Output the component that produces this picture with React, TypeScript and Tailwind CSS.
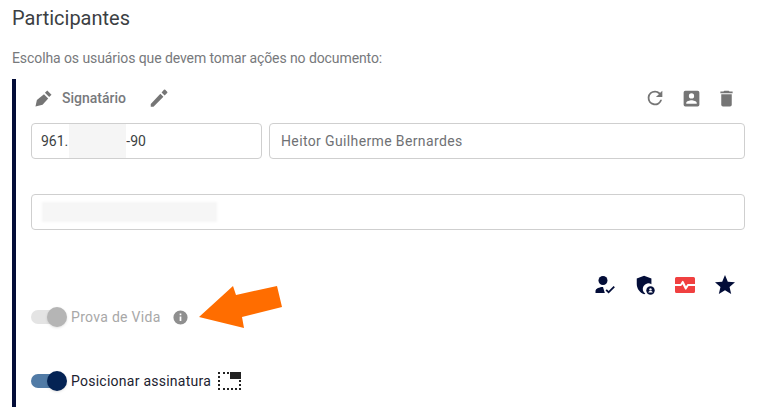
function PenIcon({ className }: { className?: string }) {
  return (
    <svg viewBox="0 0 24 24" className={className} fill="currentColor">
      <path d="M3 18.500V21.500h3L16.800 10.700l-3.300-3.300L3 18.500zM20.900 6.600a1 1 0 0 0 0-1.400l-2.100-2.100a1 1 0 0 0-1.400 0l-2.600 2.900 3.300 3.300 2.800-2.700z" />
    </svg>
  );
}

function SignIcon({ className }: { className?: string }) {
  return (
    <svg viewBox="0 0 18 18" className={className} fill="currentColor">
      <path d="M0.500 17.500 L2 10.500 L9.500 4.500 L14 9 L8 15.500 Z" />
      <path d="M10.500 3 L13 0.500 L17.500 5 L15 7.500 Z" />
    </svg>
  );
}

function Switch({ disabled }: { disabled?: boolean }) {
  return (
    <div className="relative h-[14px] w-[36px] shrink-0">
      <div className={`absolute left-0 top-0 h-[14px] w-[33px] rounded-full ${disabled ? "bg-[#e4e4e4]" : "bg-[#517ba6]"}`} />
      <div className={`absolute right-0 top-[-3px] h-[20px] w-[20px] rounded-full shadow-sm ${disabled ? "bg-[#b5b5b5]" : "bg-[#042354]"}`} />
    </div>
  );
}

export default function App() {
  return (
    <div className="relative h-[407px] w-[769px] overflow-hidden bg-white pl-[12px] font-['Roboto',sans-serif]">
      <h1 className="pt-[5px] text-[20px] leading-[26px] text-[#3c3f43]">Participantes</h1>
      <p className="mt-[17px] text-[14px] leading-[20px] tracking-[-0.09px] text-[#77797c]">
        Escolha os usuários que devem tomar ações no documento:
      </p>

      <div className="mt-[11px] h-[400px] w-[733px] border-l-4 border-[#030d38] pl-[15px]">
        <div className="flex h-[44px] w-[714px] items-center pb-[6px]">
          <SignIcon className="ml-[4px] h-[17px] w-[17px] text-[#757575]" />
          <span className="ml-[10px] text-[14px] font-medium text-[#77797c]">Signatário</span>
          <PenIcon className="ml-[22px] h-[22px] w-[22px] text-[#757575]" />
          <svg viewBox="0 0 24 24" className="ml-auto h-[22px] w-[22px] text-[#757575]" fill="currentColor">
            <path d="M17.650 6.350A7.950 7.950 0 0 0 12 4a8 8 0 1 0 7.730 10h-2.080A6 6 0 1 1 12 6c1.660 0 3.140.690 4.220 1.780L13 11h7V4l-2.350 2.350z" />
          </svg>
          <svg viewBox="0 0 24 24" className="ml-[15px] h-[21px] w-[21px] text-[#757575]" fill="currentColor">
            <path d="M5 3a2 2 0 0 0-2 2v14a2 2 0 0 0 2 2h14a2 2 0 0 0 2-2V5a2 2 0 0 0-2-2H5zm7 3a3 3 0 1 1 0 6 3 3 0 0 1 0-6zm-6 12v-1c0-2 4-3.100 6-3.100s6 1.100 6 3.100v1H6z" />
          </svg>
          <svg viewBox="0 0 24 24" className="ml-[14px] mr-[8px] h-[21px] w-[21px] text-[#757575]" fill="currentColor">
            <path d="M6 19a2 2 0 0 0 2 2h8a2 2 0 0 0 2-2V7H6v12zM19 4h-3.500l-1-1h-5l-1 1H5v2h14V4z" />
          </svg>
        </div>

        <div className="flex w-[714px] gap-[7px]">
          <div className="relative flex h-[36px] w-[231px] items-center rounded-[4px] border border-[#cfcfcf] px-[9px] text-[14px] text-[#3c3f43]">
            961.<span className="w-[58px]" />-90
            <div className="absolute left-[37px] top-0 h-[34px] w-[57px] bg-[#f5f5f5]" />
          </div>
          <div className="flex h-[36px] flex-1 items-center rounded-[4px] border border-[#cfcfcf] px-[11px] text-[14px] tracking-[0.37px] text-[#6f7174]">
            Heitor Guilherme Bernardes
          </div>
        </div>

        <div className="mt-[35px] flex h-[36px] w-[714px] items-center rounded-[4px] border border-[#cfcfcf] px-[10px]">
          <div className="h-[20px] w-[175px] bg-[#f6f6f6] blur-[1px]" />
        </div>

        <div className="mt-[43px] flex h-[24px] w-[714px] items-center justify-end gap-[17px] pr-[8px]">
          <svg viewBox="0 0 24 24" className="h-[24px] w-[24px] text-[#030d38]" fill="currentColor">
            <circle cx="10" cy="7.500" r="4.500" />
            <path d="M10 14c-3.500 0-7.500 1.600-7.500 4v2h9.300l-1.800-5.900c.1 0 0-.1 0-.1z" />
            <path d="M15.600 20.600l-3.100-3.100 1.300-1.300 1.800 1.800 5-5 1.300 1.300z" />
          </svg>
          <svg viewBox="0 0 24 24" className="h-[22px] w-[22px] text-[#030d38]" fill="currentColor">
            <path d="M11 2L3 5v6c0 5 3.400 9.700 8 11 .5-.1 1-.3 1.400-.5A6 6 0 0 1 19 11.100V5l-8-3z" />
            <circle cx="18" cy="18" r="4.600" />
            <circle cx="18" cy="16.800" r="1.300" fill="#fff" />
            <path d="M15.600 20.300c.3-1.200 1.400-1.700 2.400-1.700s2.100.5 2.400 1.700z" fill="#fff" />
          </svg>
          <svg viewBox="0 0 24 24" className="h-[24px] w-[24px] text-[#f04040]" fill="currentColor">
            <path d="M3.500 4A1.500 1.500 0 0 0 2 5.500V11h5.400l1.500-2.600a1 1 0 0 1 1.700 0l2.400 4.900 1.100-1.800a1 1 0 0 1 .9-.5H22V5.500A1.500 1.500 0 0 0 20.500 4h-17z" />
            <path d="M2 13v5.500A1.500 1.500 0 0 0 3.500 20h17a1.500 1.500 0 0 0 1.500-1.500V13h-6.500l-1.900 3a1 1 0 0 1-1.700-.1l-2.400-4.700-.9 1.300a1 1 0 0 1-.8.500H2z" />
          </svg>
          <svg viewBox="0 0 24 24" className="-ml-px h-[24px] w-[24px] text-[#030d38]" fill="currentColor">
            <path d="M12 17.270 18.180 21l-1.640-7.030L22 9.240l-7.190-.610L12 2 9.190 8.630 2 9.240l5.460 4.730L5.820 21z" />
          </svg>
        </div>

        <div className="mt-[8px] flex h-[24px] items-center gap-[4px]">
          <Switch disabled />
          <span className="text-[14px] tracking-[0.3px] text-[#a8a8a8]">Prova de Vida</span>
          <svg viewBox="0 0 24 24" className="ml-[7px] h-[17px] w-[17px] text-[#8f8f8f]" fill="currentColor">
            <path d="M12 2a10 10 0 1 0 0 20 10 10 0 0 0 0-20zm1.200 15h-2.400v-6.500h2.400V17zm0-8.300h-2.400V6.500h2.400v2.200z" />
          </svg>
        </div>

        <div className="mt-[40px] flex h-[24px] items-center gap-[4px]">
          <Switch />
          <span className="text-[14px] tracking-[0.25px] text-[#1c2230]">Posicionar assinatura</span>
          <div className="relative ml-[3px] h-[18px] w-[23px] border-2 border-dotted border-[#222]">
            <div className="absolute right-[-2px] top-[-2px] h-[7px] w-[11px] bg-[#222]" />
          </div>
        </div>
      </div>

      <svg viewBox="0 0 85 44" className="absolute left-[198px] top-[285px] h-[44px] w-[85px] text-[#ff6d00]" fill="currentColor">
        <path d="M1 32 L35 1 L38 10 L79 1 L84 22 L44 32 L46 43 Z" />
      </svg>
    </div>
  );
}
